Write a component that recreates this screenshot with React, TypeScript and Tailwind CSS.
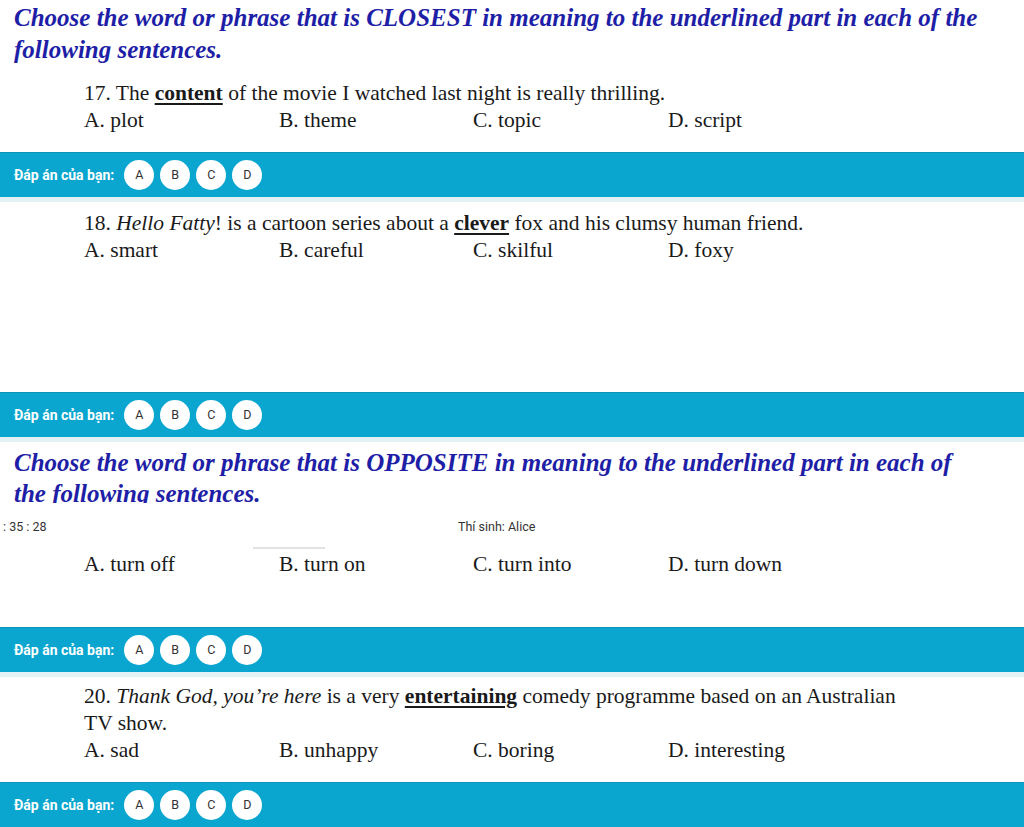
import React from "react";

type Opt = string[];

function Options({ items }: { items: Opt }) {
  return (
    <div className="grid grid-cols-[195px_194px_195px_195px] pl-[84px] leading-[27px]">
      {items.map((o) => (
        <div key={o}>{o}</div>
      ))}
    </div>
  );
}

function AnswerBar() {
  return (
    <div>
      <div className="h-[45px] bg-[#0aa6d0] border-t border-[#0b93ba] flex items-center pl-[14px] font-['Roboto',sans-serif]">
        <span className="text-white font-bold text-[14px] mr-[10px]">Đáp án của bạn:</span>
        <div className="flex gap-[6px]">
          {["A", "B", "C", "D"].map((l) => (
            <div
              key={l}
              className="w-[30px] h-[30px] rounded-full bg-white flex items-center justify-center text-[12.5px] text-[#333]"
            >
              {l}
            </div>
          ))}
        </div>
      </div>
      <div className="h-[5px] bg-[#e2f2f5]" />
    </div>
  );
}

function U({ children }: { children: React.ReactNode }) {
  return (
    <span className="font-bold underline underline-offset-[3px] decoration-[1.5px]">
      {children}
    </span>
  );
}

export default function App() {
  return (
    <div className="w-[1024px] h-[827px] overflow-hidden bg-white text-[#1a1a1a] font-['Liberation_Serif',serif] text-[21.5px]">
      {/* Section header 1 */}
      <div className="h-[66px] pt-[2px] pl-[14px] pr-[10px] text-[25px] leading-[32px] font-bold italic text-[#1e1ea6]">
        Choose the word or phrase that is CLOSEST in meaning to the underlined part in each of the following sentences.
      </div>

      {/* Q17 */}
      <div className="h-[86px] pt-[14px]">
        <div className="pl-[84px] leading-[27px]">
          17. The <U>content</U> of the movie I watched last night is really thrilling.
        </div>
        <Options items={["A. plot", "B. theme", "C. topic", "D. script"]} />
      </div>
      <AnswerBar />

      {/* Q18 */}
      <div className="h-[190px] pt-[8px]">
        <div className="pl-[84px] leading-[27px]">
          18. <i>Hello Fatty</i>! is a cartoon series about a <U>clever</U> fox and his clumsy human friend.
        </div>
        <Options items={["A. smart", "B. careful", "C. skilful", "D. foxy"]} />
      </div>
      <AnswerBar />

      {/* Section header 2 (clipped by sticky bar) */}
      <div className="h-[61px] overflow-hidden pt-[5px] pl-[14px] pr-[50px] text-[25px] leading-[31px] font-bold italic text-[#1e1ea6]">
        Choose the word or phrase that is OPPOSITE in meaning to the underlined part in each of the following sentences.
      </div>

      {/* Timer / candidate bar */}
      <div className="h-[44px] flex items-center pt-[4px] font-['Roboto',sans-serif] text-[12.5px] text-[#333]">
        <span className="w-[458px] pl-[3px]">: 35 : 28</span>
        <span>Thí sinh: Alice</span>
      </div>

      {/* Q19 (partially hidden) */}
      <div className="h-[80px]">
        <div className="ml-[253px] w-[72px] h-[2px] bg-[#e2e2e2]" />
        <div className="pt-[2px]">
          <Options items={["A. turn off", "B. turn on", "C. turn into", "D. turn down"]} />
        </div>
      </div>
      <AnswerBar />

      {/* Q20 */}
      <div className="h-[105px] pt-[6px]">
        <div className="pl-[84px] pr-[100px] leading-[27px]">
          20. <i>Thank God, you’re here</i> is a very <U>entertaining</U> comedy programme based on an Australian TV show.
        </div>
        <Options items={["A. sad", "B. unhappy", "C. boring", "D. interesting"]} />
      </div>
      <AnswerBar />
    </div>
  );
}
